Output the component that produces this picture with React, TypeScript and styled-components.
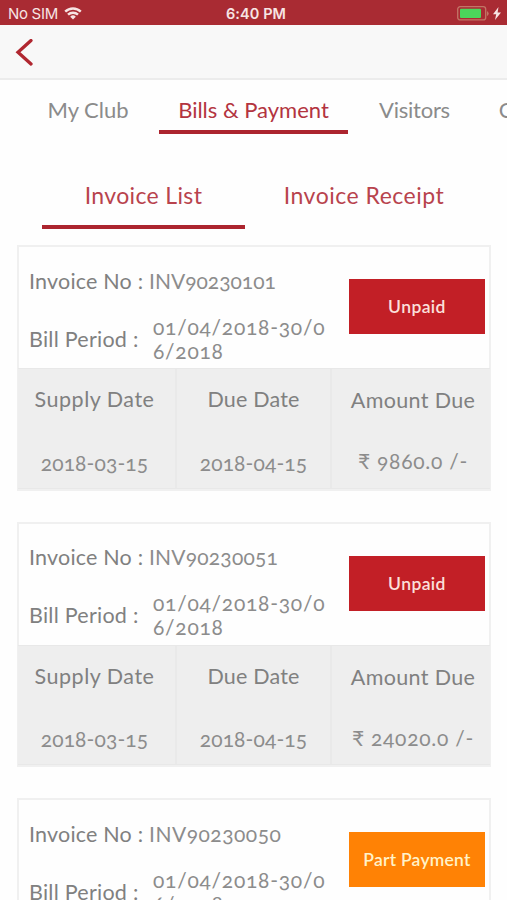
import React from 'react';
import styled, { createGlobalStyle } from 'styled-components';

const GlobalStyle = createGlobalStyle`
  * { box-sizing: border-box; }
  html, body { margin: 0; height: 900px; overflow: hidden; background: #fefefe; }
`;

const Screen = styled.main`
  width: 507px;
  height: 900px;
  overflow: hidden;
  background: #fefefe;
  font-family: Lato, sans-serif;
  font-variant-numeric: oldstyle-nums;
  color: #808080;
  white-space: nowrap;
`;

const StatusBar = styled.header`
  height: 25px;
  padding: 2px 6px 0 8px;
  display: grid;
  grid-template-columns: 1fr auto 1fr;
  align-items: center;
  background: #a92b33;
  color: #f7e4e4;
  font: 15px/20px Inter, sans-serif;
`;

const Carrier = styled.div`
  display: flex;
  align-items: center;
  gap: 6px;
  letter-spacing: -0.3px;
`;

const Clock = styled.div`
  font-weight: 600;
  font-size: 14.5px;
  letter-spacing: 0.1px;
  padding-left: 3px;
`;

const Power = styled.div`
  display: flex;
  justify-content: flex-end;
  align-items: center;
  gap: 4px;
`;

const NavBar = styled.nav`
  height: 55px;
  padding: 14px 0 0 15px;
  background: #f8f8f8;
  border-bottom: 2px solid #ececec;
`;

const BackButton = styled.button`
  display: block;
  padding: 0;
  border: 0;
  background: none;
`;

const Tabs = styled.div`
  display: flex;
  height: 54px;
  padding-left: 17px;
`;

const Tab = styled.div<{ $w: number; $active?: boolean; $ls?: number }>`
  flex: none;
  width: ${p => p.$w}px;
  height: 54px;
  padding-top: 17px;
  text-align: center;
  font-size: 22px;
  line-height: 26px;
  letter-spacing: ${p => p.$ls ?? 0}px;
  color: ${p => (p.$active ? '#b33440' : '#8b8b8b')};
  border-bottom: 4px solid ${p => (p.$active ? '#ac252f' : 'transparent')};
`;

const SubTabs = styled.div`
  display: flex;
  height: 111px;
  padding: 39px 0 16px 42px;
`;

const SubTab = styled.div<{ $w: number; $active?: boolean; $ls?: number }>`
  width: ${p => p.$w}px;
  height: 56px;
  padding-top: 8px;
  text-align: center;
  font-size: 23px;
  line-height: 28px;
  letter-spacing: ${p => p.$ls ?? 0}px;
  color: #b8434d;
  border-bottom: 4px solid ${p => (p.$active ? '#ac252f' : 'transparent')};
`;

const List = styled.section`
  display: flex;
  flex-direction: column;
  gap: 31.2px;
  padding-left: 17px;
`;

const Card = styled.article`
  flex: none;
  width: 474px;
  height: 245.5px;
  border: 2px solid #f0f0f0;
  background: #fefefe;
`;

const Summary = styled.div`
  display: flex;
  justify-content: space-between;
  height: 121px;
  padding: 0 4px 0 10px;
`;

const Details = styled.div`
  padding-top: 19.5px;
`;

const Line = styled.div<{ $gap: number }>`
  display: flex;
  align-items: center;
  gap: ${p => p.$gap}px;
`;

const Caption = styled.span<{ $w: number; $ls: number }>`
  width: ${p => p.$w}px;
  font-size: 21.5px;
  line-height: 28px;
  letter-spacing: ${p => p.$ls}px;
`;

const Value = styled.span<{ $ls?: number }>`
  font-size: 21px;
  line-height: 24px;
  letter-spacing: ${p => p.$ls ?? 0.12}px;
  color: #8c8c8c;
`;

const Period = styled(Value)`
  padding-top: 20px;
  align-self: flex-start;
`;

const PeriodLine = styled(Line)`
  height: 82px;
  ${Caption} { padding-top: 6px; }
`;

const Status = styled.button<{ $partial: boolean }>`
  width: 136px;
  height: 55px;
  margin-top: 32px;
  padding: 0;
  border: 0;
  background: ${p => (p.$partial ? '#ff8205' : '#c21f26')};
  color: ${p => (p.$partial ? '#fff2c9' : '#fbe0dc')};
  font: 600 17.5px Lato, sans-serif;
  letter-spacing: ${p => (p.$partial ? 0.25 : 0.4)}px;
`;

const Figures = styled.div`
  display: grid;
  grid-template-columns: 159px 155px 1fr;
  height: 120.5px;
  margin: 0 -1px;
  background: #eeeeee;
  border-top: 1px solid #e8e8e8;
  border-bottom: 1px solid #e8e8e8;
`;

const Figure = styled.div<{ $drop?: boolean; $nudge?: number }>`
  display: flex;
  flex-direction: column;
  align-items: center;
  gap: ${p => (p.$drop ? 36 : 38.5)}px;
  padding-top: ${p => (p.$drop ? 18 : 17)}px;
  padding-left: ${p => (p.$drop ? 4 : 0)}px;
  padding-right: ${p => p.$nudge ?? 0}px;
  border-right: ${p => (p.$drop ? 0 : 2)}px solid #e9e9e9;
`;

const FigureTitle = styled.span<{ $ls: number }>`
  font-size: 21.5px;
  line-height: 26px;
  letter-spacing: ${p => p.$ls}px;
`;

const invoices = [
  { no: 'INV90230101', amount: '9860.0', status: 'Unpaid', spacing: 0 },
  { no: 'INV90230051', amount: '24020.0', status: 'Unpaid', spacing: 0.2 },
  { no: 'INV90230050', amount: '24020.0', status: 'Part Payment', spacing: 0.5 },
];

export default function App() {
  return (
    <>
      <GlobalStyle />
      <Screen>
        <StatusBar>
          <Carrier>
            No SIM
            <svg width="18" height="13" viewBox="0 0 18 13" fill="none" stroke="#f7e4e4" strokeWidth="2.4">
              <path d="M1.2 4.6a11.2 11.2 0 0 1 15.6 0M4 7.7a7.2 7.2 0 0 1 10 0" />
              <path d="M9 12.4 6.2 9.7a4 4 0 0 1 5.6 0z" fill="#f7e4e4" stroke="none" />
            </svg>
          </Carrier>
          <Clock>6:40 PM</Clock>
          <Power>
            <svg width="32" height="15" viewBox="0 0 32 15">
              <rect x="0.7" y="0.7" width="28" height="13.2" rx="2.5" fill="none" stroke="#c27566" strokeWidth="1.3" />
              <rect x="3" y="2.7" width="21" height="9.3" rx="1" fill="#4bd65b" />
              <path d="M30 5v5q1.7-1 1.7-2.5T30 5z" fill="#c27566" />
            </svg>
            <svg width="8" height="13" viewBox="0 0 8 13" fill="#f7e4e4">
              <path d="M5.5 0 0 7.2h3.2L2 13l6-7.4H4.6z" />
            </svg>
          </Power>
        </StatusBar>
        <NavBar>
          <BackButton aria-label="Back">
            <svg width="18" height="27" viewBox="0 0 18 27" fill="none" stroke="#b02730" strokeWidth="3.3">
              <path d="M16 1.5 3 13.3 16 25" strokeLinecap="round" />
            </svg>
          </BackButton>
        </NavBar>
        <Tabs>
          <Tab $w={142}>My Club</Tab>
          <Tab $w={189} $active>Bills &amp; Payment</Tab>
          <Tab $w={133} $ls={-0.25}>Visitors</Tab>
          <Tab $w={144}>Complaints</Tab>
        </Tabs>
        <SubTabs>
          <SubTab $w={203} $ls={0.35} $active>Invoice List</SubTab>
          <SubTab $w={238} $ls={0.5}>Invoice Receipt</SubTab>
        </SubTabs>
        <List>
          {invoices.map(inv => (
            <Card key={inv.no}>
              <Summary>
                <Details>
                  <Line $gap={6}>
                    <Caption $w={114} $ls={0.2}>Invoice No :</Caption>
                    <Value $ls={inv.spacing}>{inv.no}</Value>
                  </Line>
                  <PeriodLine $gap={10}>
                    <Caption $w={114} $ls={0.25}>Bill Period :</Caption>
                    <Period $ls={0.75}>01/04/2018-30/0<br />6/2018</Period>
                  </PeriodLine>
                </Details>
                <Status $partial={inv.status !== 'Unpaid'}>{inv.status}</Status>
              </Summary>
              <Figures>
                <Figure $nudge={4}>
                  <FigureTitle $ls={0.5}>Supply Date</FigureTitle>
                  <Value>2018-03-15</Value>
                </Figure>
                <Figure>
                  <FigureTitle $ls={0.2}>Due Date</FigureTitle>
                  <Value>2018-04-15</Value>
                </Figure>
                <Figure $drop>
                  <FigureTitle $ls={0.35}>Amount Due</FigureTitle>
                  <Value $ls={0.75}>₹ {inv.amount} /-</Value>
                </Figure>
              </Figures>
            </Card>
          ))}
        </List>
      </Screen>
    </>
  );
}
